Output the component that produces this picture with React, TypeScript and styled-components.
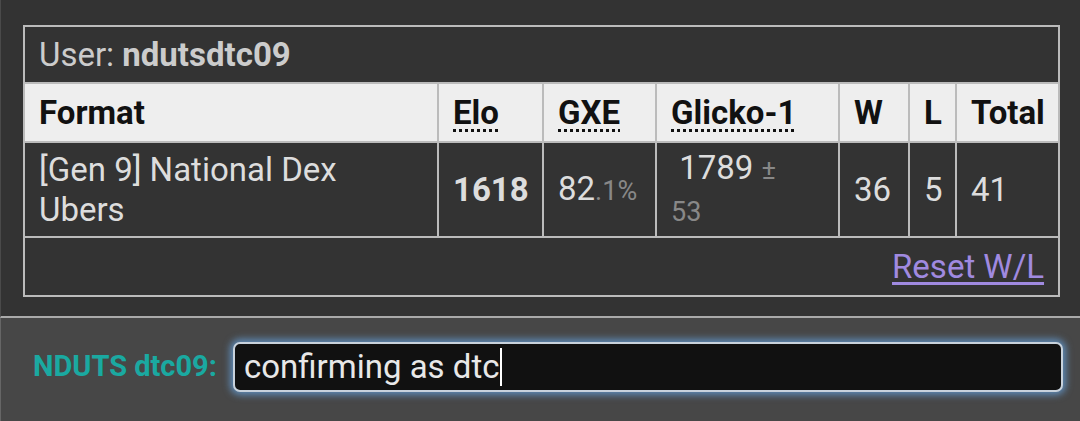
import React from 'react'
import styled, { createGlobalStyle } from 'styled-components'

const GlobalStyle = createGlobalStyle`
  html, body {
    margin: 0;
    padding: 0;
    background: #333;
    font-family: Roboto, "Noto Sans", sans-serif;
  }
`

const Page = styled.div`
  width: 1080px;
  height: 421px;
  overflow: hidden;
  display: flex;
  flex-direction: column;
`

const Panel = styled.div`
  background: #333;
  border-left: 1px solid #4a4a4a;
  padding: 0 0 19px 22px;
  border-bottom: 2px solid #aaa;
`

// the line above the table is scrolled mostly out of view
const CutLine = styled.div`
  height: 25px;
  overflow: hidden;
  padding-left: 88px;
  color: #999;
  font-size: 30px;
  line-height: 30px;
  white-space: pre;
`

const CutText = styled.div`
  margin-top: -31px;
`

const Table = styled.table`
  border-collapse: collapse;
  table-layout: fixed;
  width: 1035px;
  border: 2px solid #bbb;
  color: #ddd;
  font-size: 33px;
`

const Cell = styled.td<{ $align?: string }>`
  border: 2px solid #bbb;
  padding: 0 14px;
  text-align: ${(p) => p.$align || 'left'};
  vertical-align: middle;
`

const UserCell = styled(Cell).attrs({ as: 'th' })`
  font-weight: normal;
  color: #ccc;
  height: 55px;
  b {
    font-weight: bold;
  }
`

const HeadCell = styled(Cell).attrs({ as: 'th' })`
  background: #eee;
  color: #111;
  font-weight: bold;
  height: 57px;
`

const Abbr = styled.span`
  text-decoration: underline dotted 3px;
  text-underline-offset: 5px;
`

const DataRow = styled.tr`
  height: 95px;
  line-height: 40px;
`

const Strong = styled.b`
  font-weight: bold;
`

const Small = styled.small`
  color: #888;
  font-size: 27px;
`

const FootCell = styled(Cell)`
  height: 57px;
  text-align: right;
  padding-right: 14px;
`

const ResetLink = styled.a`
  color: #a08ae0;
  text-decoration: underline;
  text-underline-offset: 4px;
  cursor: pointer;
`

const ChatBar = styled.div`
  flex: 1;
  background: #474747;
  border-left: 1px solid #666;
  display: flex;
  align-items: flex-start;
  padding: 24px 17px 0 32px;
  gap: 16px;
`

const Name = styled.strong`
  color: #1aa9a1;
  font-size: 29px;
  font-weight: bold;
  line-height: 48px;
  white-space: nowrap;
`

const ChatInput = styled.div`
  flex: 1;
  height: 50px;
  box-sizing: border-box;
  background: #111;
  border: 2px solid #c8d2dc;
  border-radius: 7px;
  box-shadow: 0 0 7px 3px rgba(100, 155, 210, 0.8);
  color: #e8e8e8;
  font-size: 33px;
  line-height: 46px;
  padding: 0 9px;
  display: flex;
  align-items: center;
`

const Caret = styled.span`
  display: inline-block;
  width: 2px;
  height: 38px;
  background: #fff;
  margin-left: 1px;
`

export default function App() {
  return (
    <Page>
      <GlobalStyle />
      <Panel>
        <CutLine>
          <CutText>{'Copy by  Sym,,'}</CutText>
        </CutLine>
        <Table>
          <colgroup>
            <col style={{ width: 414 }} />
            <col style={{ width: 105 }} />
            <col style={{ width: 113 }} />
            <col style={{ width: 183 }} />
            <col style={{ width: 70 }} />
            <col style={{ width: 47 }} />
            <col style={{ width: 103 }} />
          </colgroup>
          <tbody>
            <tr>
              <UserCell colSpan={7}>
                User: <b>ndutsdtc09</b>
              </UserCell>
            </tr>
            <tr>
              <HeadCell>Format</HeadCell>
              <HeadCell>
                <Abbr>Elo</Abbr>
              </HeadCell>
              <HeadCell>
                <Abbr>GXE</Abbr>
              </HeadCell>
              <HeadCell>
                <Abbr>Glicko-1</Abbr>
              </HeadCell>
              <HeadCell>W</HeadCell>
              <HeadCell>L</HeadCell>
              <HeadCell>Total</HeadCell>
            </tr>
            <DataRow>
              <Cell>
                [Gen 9] National Dex
                <br />
                Ubers
              </Cell>
              <Cell>
                <Strong>1618</Strong>
              </Cell>
              <Cell>
                82<Small>.1%</Small>
              </Cell>
              <Cell>
                {'\u00a0'}1789 <Small>±<br />53</Small>
              </Cell>
              <Cell>36</Cell>
              <Cell>5</Cell>
              <Cell>41</Cell>
            </DataRow>
            <tr>
              <FootCell colSpan={7}>
                <ResetLink>Reset W/L</ResetLink>
              </FootCell>
            </tr>
          </tbody>
        </Table>
      </Panel>
      <ChatBar>
        <Name>NDUTS dtc09:</Name>
        <ChatInput>
          confirming as dtc
          <Caret />
        </ChatInput>
      </ChatBar>
    </Page>
  )
}
